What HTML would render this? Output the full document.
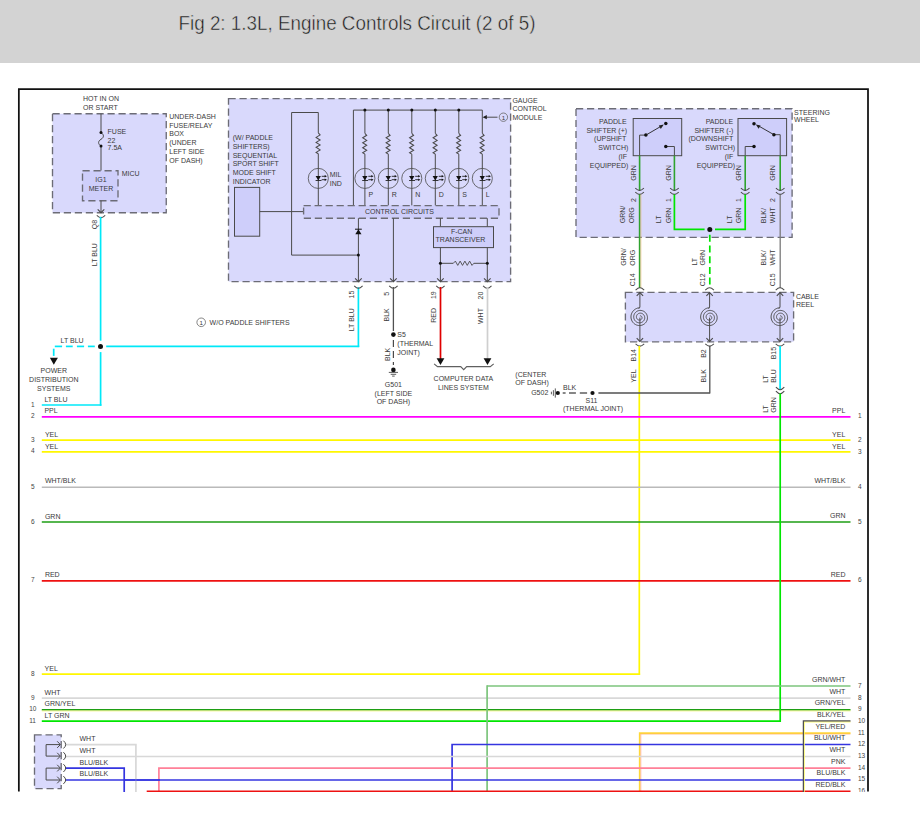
<!DOCTYPE html>
<html><head><meta charset="utf-8"><style>
html,body{margin:0;padding:0;background:#fff;width:920px;height:817px;overflow:hidden}
svg{display:block}
text{font-family:"Liberation Sans",sans-serif}
</style></head><body>
<svg width="920" height="817" viewBox="0 0 920 817">
<defs><clipPath id="cp"><rect x="0" y="0" width="920" height="792"/></clipPath></defs>
<g clip-path="url(#cp)">
<rect x="0" y="0" width="920" height="63" fill="#d3d3d3"/>
<text x="178.5" y="29.9" font-size="19.6" textLength="357" lengthAdjust="spacingAndGlyphs" fill="#1e1e1e" stroke="#d3d3d3" stroke-width="0.45">Fig 2: 1.3L, Engine Controls Circuit (2 of 5)</text>
<path d="M18.85,791.5 L18.85,89 L868,89 L868,791.5" fill="none" stroke="#111" stroke-width="1.75"/>
<rect x="52.5" y="113.75" width="113.75" height="99.0" fill="#d9d9fc" stroke="#6c6c76" stroke-width="1.35" stroke-dasharray="7.2 3.8"/>
<text x="83" y="101.0" font-size="7" fill="#3a3a3a" >HOT IN ON</text>
<text x="83" y="109.7" font-size="7" fill="#3a3a3a" >OR START</text>
<text x="169.25" y="118.75" font-size="7" fill="#3a3a3a" >UNDER-DASH</text>
<text x="169.25" y="127.5" font-size="7" fill="#3a3a3a" >FUSE/RELAY</text>
<text x="169.25" y="136.25" font-size="7" fill="#3a3a3a" >BOX</text>
<text x="169.25" y="145.0" font-size="7" fill="#3a3a3a" >(UNDER</text>
<text x="169.25" y="153.75" font-size="7" fill="#3a3a3a" >LEFT SIDE</text>
<text x="169.25" y="162.5" font-size="7" fill="#3a3a3a" >OF DASH)</text>
<line x1="101" y1="113.75" x2="101" y2="132.6" stroke="#4a4a4a" stroke-width="1" />
<path d="M101,132.6 C104.2,134.6 104.2,137.4 101,139.3 C97.8,141.2 97.8,144 101,146" fill="none" stroke="#4a4a4a" stroke-width="1" />
<line x1="101" y1="146" x2="101" y2="170.75" stroke="#4a4a4a" stroke-width="1" />
<circle cx="101" cy="132.6" r="1.5" fill="#111"/>
<circle cx="101" cy="146" r="1.5" fill="#111"/>
<text x="107.6" y="133.9" font-size="7" fill="#3a3a3a" >FUSE</text>
<text x="107.6" y="142.6" font-size="7" fill="#3a3a3a" >22</text>
<text x="107.6" y="149.7" font-size="7" fill="#3a3a3a" >7.5A</text>
<rect x="82.5" y="170.75" width="35.5" height="30.0" fill="#cecefa" stroke="#6c6c76" stroke-width="1.35" stroke-dasharray="7.2 3.8"/>
<text x="101" y="182" text-anchor="middle" font-size="7" fill="#3a3a3a" >IG1</text>
<text x="101" y="190.75" text-anchor="middle" font-size="7" fill="#3a3a3a" >METER</text>
<text x="121.75" y="175.75" font-size="7" fill="#3a3a3a" >MICU</text>
<line x1="101" y1="200.75" x2="101" y2="212.6" stroke="#4a4a4a" stroke-width="1" />
<polyline points="97.7,209.29999999999998 101,212.6 104.3,209.29999999999998" fill="none" stroke="#4a4a4a" stroke-width="1.1" />
<path d="M96.8,215.29999999999998 Q99.53,217.79999999999998 101,217.6 Q102.47,217.79999999999998 105.2,215.29999999999998" fill="none" stroke="#4a4a4a" stroke-width="1.1" />
<text transform="translate(96.9,229.2) rotate(-90)" font-size="7" fill="#3a3a3a">Q8</text>
<text transform="translate(96.9,266.2) rotate(-90)" font-size="7" fill="#3a3a3a">LT BLU</text>
<line x1="100.6" y1="216.8" x2="100.6" y2="340.7" stroke="#00e8f8" stroke-width="1.7" />
<line x1="100.6" y1="352.1" x2="100.6" y2="405.8" stroke="#00e8f8" stroke-width="1.7" />
<line x1="41.8" y1="405" x2="101.45" y2="405" stroke="#00e8f8" stroke-width="1.7" />
<line x1="106.2" y1="346.3" x2="359.25" y2="346.3" stroke="#00e8f8" stroke-width="1.7" />
<line x1="358.4" y1="287.2" x2="358.4" y2="347.1" stroke="#00e8f8" stroke-width="1.7" />
<circle cx="100.5" cy="346.4" r="2.5" fill="#111"/>
<line x1="54.8" y1="346.4" x2="62.1" y2="346.4" stroke="#00e8f8" stroke-width="1.7" />
<line x1="65.9" y1="346.4" x2="72.7" y2="346.4" stroke="#00e8f8" stroke-width="1.7" />
<line x1="76.9" y1="346.4" x2="84.1" y2="346.4" stroke="#00e8f8" stroke-width="1.7" />
<line x1="87.9" y1="346.4" x2="94.8" y2="346.4" stroke="#00e8f8" stroke-width="1.7" />
<line x1="53.7" y1="348.7" x2="53.7" y2="355.9" stroke="#00e8f8" stroke-width="1.7" />
<path d="M49.9,357.8 L57.9,357.8 L53.8,364.7 Z" fill="#111"/>
<text x="60.6" y="342.6" font-size="7" fill="#3a3a3a" >LT BLU</text>
<text x="53.8" y="372.7" text-anchor="middle" font-size="7" fill="#3a3a3a" >POWER</text>
<text x="53.8" y="381.6" text-anchor="middle" font-size="7" fill="#3a3a3a" >DISTRIBUTION</text>
<text x="53.8" y="390.5" text-anchor="middle" font-size="7" fill="#3a3a3a" >SYSTEMS</text>
<circle cx="201.2" cy="322.3" r="4.3" fill="none" stroke="#666" stroke-width="0.8"/>
<text x="201.2" y="324.6" text-anchor="middle" font-size="6.2" fill="#3a3a3a" >1</text>
<text x="209.6" y="324.7" font-size="7" fill="#3a3a3a" >W/O PADDLE SHIFTERS</text>
<rect x="228.5" y="98.6" width="282.1" height="183.00000000000003" fill="#d9d9fc" stroke="#6c6c76" stroke-width="1.35" stroke-dasharray="7.2 3.8"/>
<text x="512.4" y="102.8" font-size="7" fill="#3a3a3a" >GAUGE</text>
<text x="512.4" y="111.3" font-size="7" fill="#3a3a3a" >CONTROL</text>
<text x="512.4" y="119.8" font-size="7" fill="#3a3a3a" >MODULE</text>
<text x="232.7" y="139.9" font-size="7" fill="#3a3a3a" >(W/ PADDLE</text>
<text x="232.7" y="148.7" font-size="7" fill="#3a3a3a" >SHIFTERS)</text>
<text x="232.7" y="157.5" font-size="7" fill="#3a3a3a" >SEQUENTIAL</text>
<text x="232.7" y="166.3" font-size="7" fill="#3a3a3a" >SPORT SHIFT</text>
<text x="232.7" y="175.1" font-size="7" fill="#3a3a3a" >MODE SHIFT</text>
<text x="232.7" y="183.9" font-size="7" fill="#3a3a3a" >INDICATOR</text>
<rect x="234.5" y="187.4" width="25.19999999999999" height="48.79999999999998" fill="#cecefa" stroke="#4a4a4a" stroke-width="1"/>
<line x1="259.7" y1="211.6" x2="303.6" y2="211.6" stroke="#4a4a4a" stroke-width="1" />
<polyline points="318.3,132.9 318.3,112.5 291.6,112.5 291.6,255.1 358.4,255.1" fill="none" stroke="#4a4a4a" stroke-width="1" />
<polyline points="318.3,132.9 320.1,134.9 316.1,137.4 320.1,140.0 316.1,142.4 320.1,144.9 316.1,147.3 320.1,149.9 316.1,152.4 318.3,153.7" fill="none" stroke="#4a4a4a" stroke-width="1.05" />
<line x1="318.3" y1="153.7" x2="318.3" y2="205.6" stroke="#4a4a4a" stroke-width="1" />
<circle cx="318.3" cy="178.4" r="10.05" fill="none" stroke="#4a4a4a" stroke-width="0.8"/>
<path d="M315.6,176.1 L320.90000000000003,176.1 L318.3,180.5 Z" fill="#111"/>
<line x1="315.6" y1="180.5" x2="321.5" y2="180.5" stroke="#222" stroke-width="0.9" />
<line x1="321.7" y1="176.3" x2="325.3" y2="176.3" stroke="#222" stroke-width="0.9" />
<path d="M326.90000000000003,176.3 L324.7,175.0 L324.7,177.60000000000002 Z" fill="#111"/>
<line x1="321.7" y1="179.70000000000002" x2="325.3" y2="179.70000000000002" stroke="#222" stroke-width="0.9" />
<path d="M326.90000000000003,179.70000000000002 L324.7,178.4 L324.7,181.00000000000003 Z" fill="#111"/>
<text x="329.7" y="176.9" font-size="7" fill="#3a3a3a" >MIL</text>
<text x="329.7" y="185.8" font-size="7" fill="#3a3a3a" >IND</text>
<polyline points="353.4,205.6 353.4,110.1 482.3,110.1" fill="none" stroke="#4a4a4a" stroke-width="1" />
<line x1="364.9" y1="110.1" x2="364.9" y2="133.3" stroke="#4a4a4a" stroke-width="1" />
<polyline points="364.9,133.3 366.7,135.3 362.7,137.8 366.7,140.4 362.7,142.8 366.7,145.3 362.7,147.7 366.7,150.3 362.7,152.8 364.9,154.1" fill="none" stroke="#4a4a4a" stroke-width="1.05" />
<line x1="364.9" y1="154.1" x2="364.9" y2="205.6" stroke="#4a4a4a" stroke-width="1" />
<circle cx="364.9" cy="110.1" r="1.5" fill="#111"/>
<circle cx="364.9" cy="178.4" r="10.05" fill="none" stroke="#4a4a4a" stroke-width="0.8"/>
<path d="M362.2,176.1 L367.5,176.1 L364.9,180.5 Z" fill="#111"/>
<line x1="362.2" y1="180.5" x2="368.09999999999997" y2="180.5" stroke="#222" stroke-width="0.9" />
<line x1="368.29999999999995" y1="176.3" x2="371.9" y2="176.3" stroke="#222" stroke-width="0.9" />
<path d="M373.5,176.3 L371.29999999999995,175.0 L371.29999999999995,177.60000000000002 Z" fill="#111"/>
<line x1="368.29999999999995" y1="179.70000000000002" x2="371.9" y2="179.70000000000002" stroke="#222" stroke-width="0.9" />
<path d="M373.5,179.70000000000002 L371.29999999999995,178.4 L371.29999999999995,181.00000000000003 Z" fill="#111"/>
<text x="368.4" y="196.7" font-size="7" fill="#3a3a3a" >P</text>
<line x1="388.3" y1="110.1" x2="388.3" y2="133.3" stroke="#4a4a4a" stroke-width="1" />
<polyline points="388.3,133.3 390.1,135.3 386.1,137.8 390.1,140.4 386.1,142.8 390.1,145.3 386.1,147.7 390.1,150.3 386.1,152.8 388.3,154.1" fill="none" stroke="#4a4a4a" stroke-width="1.05" />
<line x1="388.3" y1="154.1" x2="388.3" y2="205.6" stroke="#4a4a4a" stroke-width="1" />
<circle cx="388.3" cy="110.1" r="1.5" fill="#111"/>
<circle cx="388.3" cy="178.4" r="10.05" fill="none" stroke="#4a4a4a" stroke-width="0.8"/>
<path d="M385.6,176.1 L390.90000000000003,176.1 L388.3,180.5 Z" fill="#111"/>
<line x1="385.6" y1="180.5" x2="391.5" y2="180.5" stroke="#222" stroke-width="0.9" />
<line x1="391.7" y1="176.3" x2="395.3" y2="176.3" stroke="#222" stroke-width="0.9" />
<path d="M396.90000000000003,176.3 L394.7,175.0 L394.7,177.60000000000002 Z" fill="#111"/>
<line x1="391.7" y1="179.70000000000002" x2="395.3" y2="179.70000000000002" stroke="#222" stroke-width="0.9" />
<path d="M396.90000000000003,179.70000000000002 L394.7,178.4 L394.7,181.00000000000003 Z" fill="#111"/>
<text x="391.8" y="196.7" font-size="7" fill="#3a3a3a" >R</text>
<line x1="411.8" y1="110.1" x2="411.8" y2="133.3" stroke="#4a4a4a" stroke-width="1" />
<polyline points="411.8,133.3 413.6,135.3 409.6,137.8 413.6,140.4 409.6,142.8 413.6,145.3 409.6,147.7 413.6,150.3 409.6,152.8 411.8,154.1" fill="none" stroke="#4a4a4a" stroke-width="1.05" />
<line x1="411.8" y1="154.1" x2="411.8" y2="205.6" stroke="#4a4a4a" stroke-width="1" />
<circle cx="411.8" cy="110.1" r="1.5" fill="#111"/>
<circle cx="411.8" cy="178.4" r="10.05" fill="none" stroke="#4a4a4a" stroke-width="0.8"/>
<path d="M409.1,176.1 L414.40000000000003,176.1 L411.8,180.5 Z" fill="#111"/>
<line x1="409.1" y1="180.5" x2="415.0" y2="180.5" stroke="#222" stroke-width="0.9" />
<line x1="415.2" y1="176.3" x2="418.8" y2="176.3" stroke="#222" stroke-width="0.9" />
<path d="M420.40000000000003,176.3 L418.2,175.0 L418.2,177.60000000000002 Z" fill="#111"/>
<line x1="415.2" y1="179.70000000000002" x2="418.8" y2="179.70000000000002" stroke="#222" stroke-width="0.9" />
<path d="M420.40000000000003,179.70000000000002 L418.2,178.4 L418.2,181.00000000000003 Z" fill="#111"/>
<text x="415.3" y="196.7" font-size="7" fill="#3a3a3a" >N</text>
<line x1="435.3" y1="110.1" x2="435.3" y2="133.3" stroke="#4a4a4a" stroke-width="1" />
<polyline points="435.3,133.3 437.1,135.3 433.1,137.8 437.1,140.4 433.1,142.8 437.1,145.3 433.1,147.7 437.1,150.3 433.1,152.8 435.3,154.1" fill="none" stroke="#4a4a4a" stroke-width="1.05" />
<line x1="435.3" y1="154.1" x2="435.3" y2="205.6" stroke="#4a4a4a" stroke-width="1" />
<circle cx="435.3" cy="110.1" r="1.5" fill="#111"/>
<circle cx="435.3" cy="178.4" r="10.05" fill="none" stroke="#4a4a4a" stroke-width="0.8"/>
<path d="M432.6,176.1 L437.90000000000003,176.1 L435.3,180.5 Z" fill="#111"/>
<line x1="432.6" y1="180.5" x2="438.5" y2="180.5" stroke="#222" stroke-width="0.9" />
<line x1="438.7" y1="176.3" x2="442.3" y2="176.3" stroke="#222" stroke-width="0.9" />
<path d="M443.90000000000003,176.3 L441.7,175.0 L441.7,177.60000000000002 Z" fill="#111"/>
<line x1="438.7" y1="179.70000000000002" x2="442.3" y2="179.70000000000002" stroke="#222" stroke-width="0.9" />
<path d="M443.90000000000003,179.70000000000002 L441.7,178.4 L441.7,181.00000000000003 Z" fill="#111"/>
<text x="438.8" y="196.7" font-size="7" fill="#3a3a3a" >D</text>
<line x1="458.8" y1="110.1" x2="458.8" y2="133.3" stroke="#4a4a4a" stroke-width="1" />
<polyline points="458.8,133.3 460.6,135.3 456.6,137.8 460.6,140.4 456.6,142.8 460.6,145.3 456.6,147.7 460.6,150.3 456.6,152.8 458.8,154.1" fill="none" stroke="#4a4a4a" stroke-width="1.05" />
<line x1="458.8" y1="154.1" x2="458.8" y2="205.6" stroke="#4a4a4a" stroke-width="1" />
<circle cx="458.8" cy="110.1" r="1.5" fill="#111"/>
<circle cx="458.8" cy="178.4" r="10.05" fill="none" stroke="#4a4a4a" stroke-width="0.8"/>
<path d="M456.1,176.1 L461.40000000000003,176.1 L458.8,180.5 Z" fill="#111"/>
<line x1="456.1" y1="180.5" x2="462.0" y2="180.5" stroke="#222" stroke-width="0.9" />
<line x1="462.2" y1="176.3" x2="465.8" y2="176.3" stroke="#222" stroke-width="0.9" />
<path d="M467.40000000000003,176.3 L465.2,175.0 L465.2,177.60000000000002 Z" fill="#111"/>
<line x1="462.2" y1="179.70000000000002" x2="465.8" y2="179.70000000000002" stroke="#222" stroke-width="0.9" />
<path d="M467.40000000000003,179.70000000000002 L465.2,178.4 L465.2,181.00000000000003 Z" fill="#111"/>
<text x="462.3" y="196.7" font-size="7" fill="#3a3a3a" >S</text>
<line x1="482.3" y1="110.1" x2="482.3" y2="133.3" stroke="#4a4a4a" stroke-width="1" />
<polyline points="482.3,133.3 484.1,135.3 480.1,137.8 484.1,140.4 480.1,142.8 484.1,145.3 480.1,147.7 484.1,150.3 480.1,152.8 482.3,154.1" fill="none" stroke="#4a4a4a" stroke-width="1.05" />
<line x1="482.3" y1="154.1" x2="482.3" y2="205.6" stroke="#4a4a4a" stroke-width="1" />
<circle cx="482.3" cy="178.4" r="10.05" fill="none" stroke="#4a4a4a" stroke-width="0.8"/>
<path d="M479.6,176.1 L484.90000000000003,176.1 L482.3,180.5 Z" fill="#111"/>
<line x1="479.6" y1="180.5" x2="485.5" y2="180.5" stroke="#222" stroke-width="0.9" />
<line x1="485.7" y1="176.3" x2="489.3" y2="176.3" stroke="#222" stroke-width="0.9" />
<path d="M490.90000000000003,176.3 L488.7,175.0 L488.7,177.60000000000002 Z" fill="#111"/>
<line x1="485.7" y1="179.70000000000002" x2="489.3" y2="179.70000000000002" stroke="#222" stroke-width="0.9" />
<path d="M490.90000000000003,179.70000000000002 L488.7,178.4 L488.7,181.00000000000003 Z" fill="#111"/>
<text x="485.8" y="196.7" font-size="7" fill="#3a3a3a" >L</text>
<line x1="497.5" y1="117.2" x2="484" y2="117.2" stroke="#4a4a4a" stroke-width="1" />
<path d="M482.6,117.2 L486.8,115.1 L486.8,119.3 Z" fill="#222"/>
<circle cx="503.4" cy="117.2" r="4.2" fill="#d9d9fc" stroke="#666" stroke-width="0.8"/>
<text x="503.4" y="119.5" text-anchor="middle" font-size="6.2" fill="#3a3a3a" >1</text>
<rect x="303.6" y="205.6" width="195.39999999999998" height="12.599999999999994" fill="#cecefa" stroke="#6c6c76" stroke-width="1.35" stroke-dasharray="7.2 3.8"/>
<text x="365" y="213.6" font-size="7" fill="#3a3a3a" >CONTROL CIRCUITS</text>
<line x1="358.4" y1="218.2" x2="358.4" y2="281" stroke="#4a4a4a" stroke-width="1" />
<path d="M355.3,234.3 L361.5,234.3 L358.4,229.2 Z" fill="#111"/>
<line x1="355" y1="229.2" x2="361.8" y2="229.2" stroke="#111" stroke-width="1" />
<circle cx="358.4" cy="255.1" r="1.5" fill="#111"/>
<line x1="393.4" y1="218.2" x2="393.4" y2="281" stroke="#4a4a4a" stroke-width="1" />
<line x1="440.4" y1="218.2" x2="440.4" y2="226.7" stroke="#4a4a4a" stroke-width="1" />
<line x1="487.3" y1="218.2" x2="487.3" y2="226.7" stroke="#4a4a4a" stroke-width="1" />
<rect x="433.5" y="226.7" width="60.0" height="20.900000000000006" fill="#cecefa" stroke="#4a4a4a" stroke-width="1"/>
<text x="461.6" y="233.9" text-anchor="middle" font-size="7" fill="#3a3a3a" >F-CAN</text>
<text x="460.5" y="241.7" text-anchor="middle" font-size="7" fill="#3a3a3a" >TRANSCEIVER</text>
<line x1="440.4" y1="247.6" x2="440.4" y2="281" stroke="#4a4a4a" stroke-width="1" />
<line x1="487.3" y1="247.6" x2="487.3" y2="281" stroke="#4a4a4a" stroke-width="1" />
<polyline points="440.4,263.3 453.3,263.3" fill="none" stroke="#4a4a4a" stroke-width="1" />
<polyline points="453.3,263.3 455.39,261.1 457.76,265.4 460.14,261.1 462.51,265.4 464.89,261.1 467.26,265.4 469.64,261.1 472.01,265.4 473.8,263.3" fill="none" stroke="#4a4a4a" stroke-width="0.9" />
<polyline points="473.8,263.3 487.3,263.3" fill="none" stroke="#4a4a4a" stroke-width="1" />
<circle cx="440.4" cy="263.2" r="1.5" fill="#111"/>
<circle cx="487.3" cy="263.2" r="1.5" fill="#111"/>
<polyline points="355.09999999999997,278.4 358.4,281.7 361.7,278.4" fill="none" stroke="#4a4a4a" stroke-width="1.1" />
<path d="M354.2,285.8 Q356.92999999999995,288.4 358.4,288.2 Q359.87,288.4 362.59999999999997,285.8" fill="none" stroke="#4a4a4a" stroke-width="1.1" />
<polyline points="390.09999999999997,278.4 393.4,281.7 396.7,278.4" fill="none" stroke="#4a4a4a" stroke-width="1.1" />
<path d="M389.2,285.8 Q391.92999999999995,288.4 393.4,288.2 Q394.87,288.4 397.59999999999997,285.8" fill="none" stroke="#4a4a4a" stroke-width="1.1" />
<polyline points="437.09999999999997,278.4 440.4,281.7 443.7,278.4" fill="none" stroke="#4a4a4a" stroke-width="1.1" />
<path d="M436.2,285.8 Q438.92999999999995,288.4 440.4,288.2 Q441.87,288.4 444.59999999999997,285.8" fill="none" stroke="#4a4a4a" stroke-width="1.1" />
<polyline points="484.0,278.4 487.3,281.7 490.6,278.4" fill="none" stroke="#4a4a4a" stroke-width="1.1" />
<path d="M483.1,285.8 Q485.83,288.4 487.3,288.2 Q488.77000000000004,288.4 491.5,285.8" fill="none" stroke="#4a4a4a" stroke-width="1.1" />
<text transform="translate(354.3,294.6) rotate(-90)" text-anchor="middle" font-size="7" fill="#3a3a3a">15</text>
<text transform="translate(354.3,331.3) rotate(-90)" font-size="7" fill="#3a3a3a">LT BLU</text>
<text transform="translate(389.4,293.8) rotate(-90)" text-anchor="middle" font-size="7" fill="#3a3a3a">5</text>
<text transform="translate(389.4,321.5) rotate(-90)" font-size="7" fill="#3a3a3a">BLK</text>
<text transform="translate(436.4,295.2) rotate(-90)" text-anchor="middle" font-size="7" fill="#3a3a3a">19</text>
<text transform="translate(436.4,322.7) rotate(-90)" font-size="7" fill="#3a3a3a">RED</text>
<text transform="translate(483.4,295.6) rotate(-90)" text-anchor="middle" font-size="7" fill="#3a3a3a">20</text>
<text transform="translate(483.4,324) rotate(-90)" font-size="7" fill="#3a3a3a">WHT</text>
<line x1="393.4" y1="287" x2="393.4" y2="331" stroke="#505050" stroke-width="1.3" />
<circle cx="393.4" cy="334.6" r="2.3" fill="#111"/>
<line x1="393.4" y1="340" x2="393.4" y2="365" stroke="#4a4a4a" stroke-width="1.2" stroke-dasharray="7 4"/>
<circle cx="393.4" cy="369.9" r="2.3" fill="#111"/>
<line x1="388.8" y1="372.4" x2="398" y2="372.4" stroke="#4a4a4a" stroke-width="0.9" />
<line x1="390.7" y1="374.3" x2="396.2" y2="374.3" stroke="#4a4a4a" stroke-width="0.9" />
<line x1="392.1" y1="376.1" x2="394.7" y2="376.1" stroke="#4a4a4a" stroke-width="0.9" />
<text transform="translate(389.7,361) rotate(-90)" font-size="7" fill="#3a3a3a">BLK</text>
<text x="397.3" y="336.8" font-size="7" fill="#3a3a3a" >S5</text>
<text x="397.3" y="345.9" font-size="7" fill="#3a3a3a" >(THERMAL</text>
<text x="397.3" y="355.0" font-size="7" fill="#3a3a3a" >JOINT)</text>
<text x="393.4" y="387.2" text-anchor="middle" font-size="7" fill="#3a3a3a" >G501</text>
<text x="393.4" y="395.6" text-anchor="middle" font-size="7" fill="#3a3a3a" >(LEFT SIDE</text>
<text x="393.4" y="404.0" text-anchor="middle" font-size="7" fill="#3a3a3a" >OF DASH)</text>
<line x1="440.5" y1="287" x2="440.5" y2="360" stroke="#e00000" stroke-width="1.7" />
<line x1="487.5" y1="287" x2="487.5" y2="360" stroke="#cfcfcf" stroke-width="1.7" />
<path d="M436.6,358.3 L444.4,358.3 L440.5,365 Z" fill="#111"/>
<path d="M483.6,358.3 L491.4,358.3 L487.5,365 Z" fill="#111"/>
<polyline points="434.1,363.9 437.5,366.6 460.7,366.6 463.7,369.6 466.7,366.6 490.3,366.6 493.7,363.9" fill="none" stroke="#606060" stroke-width="1.2" />
<text x="463.4" y="380.8" text-anchor="middle" font-size="7" fill="#3a3a3a" >COMPUTER DATA</text>
<text x="463.4" y="389.6" text-anchor="middle" font-size="7" fill="#3a3a3a" >LINES SYSTEM</text>
<rect x="576" y="108.7" width="216.10000000000002" height="128.60000000000002" fill="#d9d9fc" stroke="#6c6c76" stroke-width="1.35" stroke-dasharray="7.2 3.8"/>
<text x="794.1" y="114.6" font-size="7" fill="#3a3a3a" >STEERING</text>
<text x="794.1" y="122.4" font-size="7" fill="#3a3a3a" >WHEEL</text>
<rect x="633.2" y="118.5" width="48.5" height="37.19999999999999" fill="#cecefa" stroke="#4a4a4a" stroke-width="1"/>
<rect x="738" y="118.5" width="48.60000000000002" height="37.19999999999999" fill="#cecefa" stroke="#4a4a4a" stroke-width="1"/>
<text x="626.6" y="123.9" text-anchor="end" font-size="7" fill="#3a3a3a" >PADDLE</text>
<text x="627.1" y="132.66" text-anchor="end" font-size="7" fill="#3a3a3a" >SHIFTER (+)</text>
<text x="626.4" y="141.42" text-anchor="end" font-size="7" fill="#3a3a3a" >(UPSHIFT</text>
<text x="628.3" y="150.18" text-anchor="end" font-size="7" fill="#3a3a3a" >SWITCH)</text>
<text x="627.1" y="158.94" text-anchor="end" font-size="7" fill="#3a3a3a" >(IF</text>
<text x="628.3" y="167.7" text-anchor="end" font-size="7" fill="#3a3a3a" >EQUIPPED)</text>
<text x="733.2" y="123.9" text-anchor="end" font-size="7" fill="#3a3a3a" >PADDLE</text>
<text x="733.3" y="132.66" text-anchor="end" font-size="7" fill="#3a3a3a" >SHIFTER (-)</text>
<text x="733.2" y="141.42" text-anchor="end" font-size="7" fill="#3a3a3a" >(DOWNSHIFT</text>
<text x="735.2" y="150.18" text-anchor="end" font-size="7" fill="#3a3a3a" >SWITCH)</text>
<text x="733.3" y="158.94" text-anchor="end" font-size="7" fill="#3a3a3a" >(IF</text>
<text x="735.2" y="167.7" text-anchor="end" font-size="7" fill="#3a3a3a" >EQUIPPED)</text>
<polyline points="645.9,135.1 639.6,135.1 639.6,155.7" fill="none" stroke="#4a4a4a" stroke-width="1" />
<polyline points="665.8,146.5 674.4,146.5 674.4,155.7" fill="none" stroke="#4a4a4a" stroke-width="1" />
<circle cx="645.9" cy="135.1" r="1.75" fill="#111"/>
<circle cx="665.8" cy="123.4" r="1.75" fill="#111"/>
<circle cx="665.8" cy="146.5" r="1.75" fill="#111"/>
<line x1="645.9" y1="135.1" x2="661.5" y2="126" stroke="#222" stroke-width="0.9" />
<path d="M663.8,124.6 L658.8,125.6 L660.8,128.9 Z" fill="#222"/>
<polyline points="754,146.5 745.2,146.5 745.2,155.7" fill="none" stroke="#4a4a4a" stroke-width="1" />
<polyline points="773.9,134.7 780.2,134.7 780.2,155.7" fill="none" stroke="#4a4a4a" stroke-width="1" />
<circle cx="754" cy="123.8" r="1.75" fill="#111"/>
<circle cx="773.9" cy="134.7" r="1.75" fill="#111"/>
<circle cx="754" cy="146.5" r="1.75" fill="#111"/>
<line x1="773.9" y1="134.7" x2="758" y2="125.6" stroke="#222" stroke-width="0.9" />
<path d="M755.8,124.4 L760.6,125.4 L758.6,128.8 Z" fill="#222"/>
<line x1="639.6" y1="155.7" x2="639.6" y2="190.4" stroke="#2ea32e" stroke-width="1.6" />
<path d="M635.3000000000001,188.1 Q638.095,190.6 639.6,190.4 Q641.105,190.6 643.9,188.1" fill="none" stroke="#4a4a4a" stroke-width="1.1" />
<path d="M635.3000000000001,192.1 Q638.095,194.6 639.6,194.4 Q641.105,194.6 643.9,192.1" fill="none" stroke="#4a4a4a" stroke-width="1.1" />
<line x1="674.4" y1="155.7" x2="674.4" y2="190.4" stroke="#2ea32e" stroke-width="1.6" />
<path d="M670.1,188.1 Q672.895,190.6 674.4,190.4 Q675.905,190.6 678.6999999999999,188.1" fill="none" stroke="#4a4a4a" stroke-width="1.1" />
<path d="M670.1,192.1 Q672.895,194.6 674.4,194.4 Q675.905,194.6 678.6999999999999,192.1" fill="none" stroke="#4a4a4a" stroke-width="1.1" />
<line x1="745.2" y1="155.7" x2="745.2" y2="190.4" stroke="#2ea32e" stroke-width="1.6" />
<path d="M740.9000000000001,188.1 Q743.695,190.6 745.2,190.4 Q746.705,190.6 749.5,188.1" fill="none" stroke="#4a4a4a" stroke-width="1.1" />
<path d="M740.9000000000001,192.1 Q743.695,194.6 745.2,194.4 Q746.705,194.6 749.5,192.1" fill="none" stroke="#4a4a4a" stroke-width="1.1" />
<line x1="780.2" y1="155.7" x2="780.2" y2="190.4" stroke="#2ea32e" stroke-width="1.6" />
<path d="M775.9000000000001,188.1 Q778.695,190.6 780.2,190.4 Q781.705,190.6 784.5,188.1" fill="none" stroke="#4a4a4a" stroke-width="1.1" />
<path d="M775.9000000000001,192.1 Q778.695,194.6 780.2,194.4 Q781.705,194.6 784.5,192.1" fill="none" stroke="#4a4a4a" stroke-width="1.1" />
<line x1="639.6" y1="194.4" x2="639.6" y2="288" stroke="#2ea32e" stroke-width="1.6" />
<line x1="640.9" y1="194.4" x2="640.9" y2="288" stroke="#f0b070" stroke-width="0.6" />
<polyline points="674.4,194.4 674.4,229.4 704.6,229.4" fill="none" stroke="#00e600" stroke-width="1.7" />
<polyline points="715,229.4 745.2,229.4 745.2,194.4" fill="none" stroke="#00e600" stroke-width="1.7" />
<circle cx="709.8" cy="229.4" r="2.5" fill="#111"/>
<line x1="709.8" y1="234.8" x2="709.8" y2="288" stroke="#00e600" stroke-width="1.7" stroke-dasharray="7 3.7"/>
<line x1="780.2" y1="194.4" x2="780.2" y2="288" stroke="#7a7a7a" stroke-width="1.3" />
<text transform="translate(636.0,180.7) rotate(-90)" font-size="7" fill="#3a3a3a">GRN</text>
<text transform="translate(636.0,200) rotate(-90)" text-anchor="middle" font-size="7" fill="#3a3a3a">2</text>
<text transform="translate(625.3,223.2) rotate(-90)" font-size="7" fill="#3a3a3a">GRN/</text>
<text transform="translate(634.1,223.2) rotate(-90)" font-size="7" fill="#3a3a3a">ORG</text>
<text transform="translate(670.9,180.7) rotate(-90)" font-size="7" fill="#3a3a3a">GRN</text>
<text transform="translate(670.9,200) rotate(-90)" text-anchor="middle" font-size="7" fill="#3a3a3a">1</text>
<text transform="translate(660.5,223.2) rotate(-90)" font-size="7" fill="#3a3a3a">LT</text>
<text transform="translate(670.9,223.2) rotate(-90)" font-size="7" fill="#3a3a3a">GRN</text>
<text transform="translate(740.6,180.7) rotate(-90)" font-size="7" fill="#3a3a3a">GRN</text>
<text transform="translate(740.6,200) rotate(-90)" text-anchor="middle" font-size="7" fill="#3a3a3a">1</text>
<text transform="translate(731.8,223.2) rotate(-90)" font-size="7" fill="#3a3a3a">LT</text>
<text transform="translate(740.6,223.2) rotate(-90)" font-size="7" fill="#3a3a3a">GRN</text>
<text transform="translate(775.4,180.7) rotate(-90)" font-size="7" fill="#3a3a3a">GRN</text>
<text transform="translate(775.4,200) rotate(-90)" text-anchor="middle" font-size="7" fill="#3a3a3a">2</text>
<text transform="translate(766.4,223.2) rotate(-90)" font-size="7" fill="#3a3a3a">BLK/</text>
<text transform="translate(775.4,223.2) rotate(-90)" font-size="7" fill="#3a3a3a">WHT</text>
<text transform="translate(625.5,265.8) rotate(-90)" font-size="7" fill="#3a3a3a">GRN/</text>
<text transform="translate(634.6,265.8) rotate(-90)" font-size="7" fill="#3a3a3a">ORG</text>
<text transform="translate(634.6,286.3) rotate(-90)" font-size="7" fill="#3a3a3a">C14</text>
<text transform="translate(696.6,265.5) rotate(-90)" font-size="7" fill="#3a3a3a">LT</text>
<text transform="translate(704.9,265.5) rotate(-90)" font-size="7" fill="#3a3a3a">GRN</text>
<text transform="translate(704.9,286.3) rotate(-90)" font-size="7" fill="#3a3a3a">C12</text>
<text transform="translate(766.2,265.5) rotate(-90)" font-size="7" fill="#3a3a3a">BLK/</text>
<text transform="translate(775.4,265.5) rotate(-90)" font-size="7" fill="#3a3a3a">WHT</text>
<text transform="translate(775.4,286.3) rotate(-90)" font-size="7" fill="#3a3a3a">C15</text>
<rect x="625.4" y="292.4" width="168.20000000000005" height="49.400000000000034" fill="#d9d9fc" stroke="#6c6c76" stroke-width="1.35" stroke-dasharray="7.2 3.8"/>
<text x="795.9" y="298.8" font-size="7" fill="#3a3a3a" >CABLE</text>
<text x="795.9" y="306.9" font-size="7" fill="#3a3a3a" >REEL</text>
<path d="M635.6,290.1 Q638.395,287.6 639.9,287.8 Q641.405,287.6 644.1999999999999,290.1" fill="none" stroke="#4a4a4a" stroke-width="1.1" />
<polyline points="636.6999999999999,295.8 639.9,292.6 643.1,295.8" fill="none" stroke="#4a4a4a" stroke-width="1.1" />
<polyline points="639.9,292.6 639.9,307" fill="none" stroke="#4a4a4a" stroke-width="1" />
<path d="M639.9,307 Q639.9,308.3 638.4,308.5" fill="none" stroke="#4a4a4a" stroke-width="0.8" />
<path d="M639.90,307.70 L638.78,307.82 L637.68,308.06 L636.63,308.44 L635.63,308.93 L634.71,309.53 L633.87,310.23 L633.11,311.03 L632.47,311.90 L631.93,312.83 L631.50,313.82 L631.20,314.85 L631.03,315.89 L630.97,316.95 L631.04,318.00 L631.24,319.02 L631.55,320.01 L631.97,320.95 L632.50,321.83 L633.13,322.64 L633.84,323.36 L634.62,323.99 L635.47,324.52 L636.37,324.95 L637.31,325.26 L638.28,325.46 L639.25,325.54 L640.22,325.51 L641.18,325.36 L642.10,325.11 L642.99,324.75 L643.81,324.29 L644.58,323.74 L645.27,323.11 L645.87,322.40 L646.39,321.64 L646.81,320.82 L647.13,319.97 L647.34,319.09 L647.45,318.19 L647.45,317.30 L647.35,316.42 L647.14,315.56 L646.84,314.74 L646.44,313.97 L645.96,313.25 L645.41,312.60 L644.78,312.02 L644.10,311.52 L643.36,311.12 L642.59,310.80 L641.80,310.58 L640.98,310.45 L640.17,310.42 L639.36,310.49 L638.58,310.65 L637.82,310.90 L637.10,311.23 L636.44,311.65 L635.83,312.14 L635.29,312.69 L634.82,313.29 L634.42,313.94 L634.11,314.63 L633.89,315.35 L633.75,316.08 L633.70,316.81 L633.74,317.54 L633.86,318.26 L634.06,318.95 L634.35,319.60 L634.70,320.21 L635.12,320.77 L635.60,321.28 L636.13,321.72 L636.70,322.09 L637.31,322.38 L637.94,322.60 L638.59,322.75 L639.25,322.81 L639.90,322.80 L640.54,322.71 L641.16,322.55 L641.75,322.32 L642.30,322.02 L642.81,321.66 L643.27,321.25 L643.68,320.79 L644.02,320.29 L644.30,319.76 L644.51,319.21 L644.65,318.64 L644.72,318.06 L644.73,317.49 L644.67,316.92 L644.54,316.38 L644.35,315.85 L644.10,315.36 L643.80,314.91 L643.45,314.50 L643.06,314.14 L642.64,313.83 L642.18,313.57 L641.71,313.38 L641.22,313.24 L640.72,313.16 L640.23,313.15 L639.74,313.19 L639.26,313.29 L638.81,313.44 L638.38,313.64 L637.99,313.89 L637.63,314.18 L637.31,314.50 L637.04,314.86 L636.82,315.24 L636.64,315.64 L636.52,316.05 L636.45,316.47 L636.42,316.89 L636.45,317.30 L636.52,317.70 L636.64,318.08 L636.81,318.44 L637.01,318.77 L637.24,319.07 L637.51,319.34 L637.80,319.57 L638.11,319.76 L638.44,319.91 L638.78,320.01 L639.12,320.08 L639.46,320.10 L639.79,320.08 L640.11,320.02 L640.42,319.93 L640.71,319.80 L640.98,319.64 L641.22,319.46 L641.43,319.24 L641.61,319.01 L641.76,318.77 L641.88,318.51 L641.96,318.25 L642.01,317.99 L642.03,317.72 L642.01,317.47 L641.96,317.22 L641.89,316.98 L641.79,316.77 L641.67,316.57 L641.52,316.39 L641.36,316.24 L641.19,316.11 L641.01,316.00 L640.82,315.92 L640.63,315.87 L640.44,315.84 L640.25,315.84 L640.07,315.86 L639.90,315.90" fill="none" stroke="#4a4a4a" stroke-width="0.95" />
<line x1="639.9" y1="317.6" x2="639.9" y2="341.4" stroke="#4a4a4a" stroke-width="1" />
<polyline points="636.6999999999999,338.2 639.9,341.4 643.1,338.2" fill="none" stroke="#4a4a4a" stroke-width="1.1" />
<path d="M635.6,343.8 Q638.395,346.3 639.9,346.1 Q641.405,346.3 644.1999999999999,343.8" fill="none" stroke="#4a4a4a" stroke-width="1.1" />
<path d="M705.3000000000001,290.1 Q708.095,287.6 709.6,287.8 Q711.105,287.6 713.9,290.1" fill="none" stroke="#4a4a4a" stroke-width="1.1" />
<polyline points="706.4,295.8 709.6,292.6 712.8000000000001,295.8" fill="none" stroke="#4a4a4a" stroke-width="1.1" />
<polyline points="709.6,292.6 709.6,307" fill="none" stroke="#4a4a4a" stroke-width="1" />
<path d="M709.6,307 Q709.6,308.3 708.1,308.5" fill="none" stroke="#4a4a4a" stroke-width="0.8" />
<path d="M709.60,307.70 L708.48,307.82 L707.38,308.06 L706.33,308.44 L705.33,308.93 L704.41,309.53 L703.57,310.23 L702.81,311.03 L702.17,311.90 L701.63,312.83 L701.20,313.82 L700.90,314.85 L700.73,315.89 L700.67,316.95 L700.74,318.00 L700.94,319.02 L701.25,320.01 L701.67,320.95 L702.20,321.83 L702.83,322.64 L703.54,323.36 L704.32,323.99 L705.17,324.52 L706.07,324.95 L707.01,325.26 L707.98,325.46 L708.95,325.54 L709.92,325.51 L710.88,325.36 L711.80,325.11 L712.69,324.75 L713.51,324.29 L714.28,323.74 L714.97,323.11 L715.57,322.40 L716.09,321.64 L716.51,320.82 L716.83,319.97 L717.04,319.09 L717.15,318.19 L717.15,317.30 L717.05,316.42 L716.84,315.56 L716.54,314.74 L716.14,313.97 L715.66,313.25 L715.11,312.60 L714.48,312.02 L713.80,311.52 L713.06,311.12 L712.29,310.80 L711.50,310.58 L710.68,310.45 L709.87,310.42 L709.06,310.49 L708.28,310.65 L707.52,310.90 L706.80,311.23 L706.14,311.65 L705.53,312.14 L704.99,312.69 L704.52,313.29 L704.12,313.94 L703.81,314.63 L703.59,315.35 L703.45,316.08 L703.40,316.81 L703.44,317.54 L703.56,318.26 L703.76,318.95 L704.05,319.60 L704.40,320.21 L704.82,320.77 L705.30,321.28 L705.83,321.72 L706.40,322.09 L707.01,322.38 L707.64,322.60 L708.29,322.75 L708.95,322.81 L709.60,322.80 L710.24,322.71 L710.86,322.55 L711.45,322.32 L712.00,322.02 L712.51,321.66 L712.97,321.25 L713.38,320.79 L713.72,320.29 L714.00,319.76 L714.21,319.21 L714.35,318.64 L714.42,318.06 L714.43,317.49 L714.37,316.92 L714.24,316.38 L714.05,315.85 L713.80,315.36 L713.50,314.91 L713.15,314.50 L712.76,314.14 L712.34,313.83 L711.88,313.57 L711.41,313.38 L710.92,313.24 L710.42,313.16 L709.93,313.15 L709.44,313.19 L708.96,313.29 L708.51,313.44 L708.08,313.64 L707.69,313.89 L707.33,314.18 L707.01,314.50 L706.74,314.86 L706.52,315.24 L706.34,315.64 L706.22,316.05 L706.15,316.47 L706.12,316.89 L706.15,317.30 L706.22,317.70 L706.34,318.08 L706.51,318.44 L706.71,318.77 L706.94,319.07 L707.21,319.34 L707.50,319.57 L707.81,319.76 L708.14,319.91 L708.48,320.01 L708.82,320.08 L709.16,320.10 L709.49,320.08 L709.81,320.02 L710.12,319.93 L710.41,319.80 L710.68,319.64 L710.92,319.46 L711.13,319.24 L711.31,319.01 L711.46,318.77 L711.58,318.51 L711.66,318.25 L711.71,317.99 L711.73,317.72 L711.71,317.47 L711.66,317.22 L711.59,316.98 L711.49,316.77 L711.37,316.57 L711.22,316.39 L711.06,316.24 L710.89,316.11 L710.71,316.00 L710.52,315.92 L710.33,315.87 L710.14,315.84 L709.95,315.84 L709.77,315.86 L709.60,315.90" fill="none" stroke="#4a4a4a" stroke-width="0.95" />
<line x1="709.6" y1="317.6" x2="709.6" y2="341.4" stroke="#4a4a4a" stroke-width="1" />
<polyline points="706.4,338.2 709.6,341.4 712.8000000000001,338.2" fill="none" stroke="#4a4a4a" stroke-width="1.1" />
<path d="M705.3000000000001,343.8 Q708.095,346.3 709.6,346.1 Q711.105,346.3 713.9,343.8" fill="none" stroke="#4a4a4a" stroke-width="1.1" />
<path d="M775.7,290.1 Q778.495,287.6 780.0,287.8 Q781.505,287.6 784.3,290.1" fill="none" stroke="#4a4a4a" stroke-width="1.1" />
<polyline points="776.8,295.8 780.0,292.6 783.2,295.8" fill="none" stroke="#4a4a4a" stroke-width="1.1" />
<polyline points="780.0,292.6 780.0,307" fill="none" stroke="#4a4a4a" stroke-width="1" />
<path d="M780.0,307 Q780.0,308.3 778.5,308.5" fill="none" stroke="#4a4a4a" stroke-width="0.8" />
<path d="M780.00,307.70 L778.88,307.82 L777.78,308.06 L776.73,308.44 L775.73,308.93 L774.81,309.53 L773.97,310.23 L773.21,311.03 L772.57,311.90 L772.03,312.83 L771.60,313.82 L771.30,314.85 L771.13,315.89 L771.07,316.95 L771.14,318.00 L771.34,319.02 L771.65,320.01 L772.07,320.95 L772.60,321.83 L773.23,322.64 L773.94,323.36 L774.72,323.99 L775.57,324.52 L776.47,324.95 L777.41,325.26 L778.38,325.46 L779.35,325.54 L780.32,325.51 L781.28,325.36 L782.20,325.11 L783.09,324.75 L783.91,324.29 L784.68,323.74 L785.37,323.11 L785.97,322.40 L786.49,321.64 L786.91,320.82 L787.23,319.97 L787.44,319.09 L787.55,318.19 L787.55,317.30 L787.45,316.42 L787.24,315.56 L786.94,314.74 L786.54,313.97 L786.06,313.25 L785.51,312.60 L784.88,312.02 L784.20,311.52 L783.46,311.12 L782.69,310.80 L781.90,310.58 L781.08,310.45 L780.27,310.42 L779.46,310.49 L778.68,310.65 L777.92,310.90 L777.20,311.23 L776.54,311.65 L775.93,312.14 L775.39,312.69 L774.92,313.29 L774.52,313.94 L774.21,314.63 L773.99,315.35 L773.85,316.08 L773.80,316.81 L773.84,317.54 L773.96,318.26 L774.16,318.95 L774.45,319.60 L774.80,320.21 L775.22,320.77 L775.70,321.28 L776.23,321.72 L776.80,322.09 L777.41,322.38 L778.04,322.60 L778.69,322.75 L779.35,322.81 L780.00,322.80 L780.64,322.71 L781.26,322.55 L781.85,322.32 L782.40,322.02 L782.91,321.66 L783.37,321.25 L783.78,320.79 L784.12,320.29 L784.40,319.76 L784.61,319.21 L784.75,318.64 L784.82,318.06 L784.83,317.49 L784.77,316.92 L784.64,316.38 L784.45,315.85 L784.20,315.36 L783.90,314.91 L783.55,314.50 L783.16,314.14 L782.74,313.83 L782.28,313.57 L781.81,313.38 L781.32,313.24 L780.82,313.16 L780.33,313.15 L779.84,313.19 L779.36,313.29 L778.91,313.44 L778.48,313.64 L778.09,313.89 L777.73,314.18 L777.41,314.50 L777.14,314.86 L776.92,315.24 L776.74,315.64 L776.62,316.05 L776.55,316.47 L776.52,316.89 L776.55,317.30 L776.62,317.70 L776.74,318.08 L776.91,318.44 L777.11,318.77 L777.34,319.07 L777.61,319.34 L777.90,319.57 L778.21,319.76 L778.54,319.91 L778.88,320.01 L779.22,320.08 L779.56,320.10 L779.89,320.08 L780.21,320.02 L780.52,319.93 L780.81,319.80 L781.08,319.64 L781.32,319.46 L781.53,319.24 L781.71,319.01 L781.86,318.77 L781.98,318.51 L782.06,318.25 L782.11,317.99 L782.13,317.72 L782.11,317.47 L782.06,317.22 L781.99,316.98 L781.89,316.77 L781.77,316.57 L781.62,316.39 L781.46,316.24 L781.29,316.11 L781.11,316.00 L780.92,315.92 L780.73,315.87 L780.54,315.84 L780.35,315.84 L780.17,315.86 L780.00,315.90" fill="none" stroke="#4a4a4a" stroke-width="0.95" />
<line x1="780.0" y1="317.6" x2="780.0" y2="341.4" stroke="#4a4a4a" stroke-width="1" />
<polyline points="776.8,338.2 780.0,341.4 783.2,338.2" fill="none" stroke="#4a4a4a" stroke-width="1.1" />
<path d="M775.7,343.8 Q778.495,346.3 780.0,346.1 Q781.505,346.3 784.3,343.8" fill="none" stroke="#4a4a4a" stroke-width="1.1" />
<line x1="639.3" y1="346" x2="639.3" y2="675" stroke="#fff700" stroke-width="1.7" />
<line x1="709.8" y1="346" x2="709.8" y2="393.6" stroke="#505050" stroke-width="1.3" />
<polyline points="598.4,393 709.8,393" fill="none" stroke="#505050" stroke-width="1.3" />
<polyline points="780.1,346 780.1,389.8" fill="none" stroke="#00e8f8" stroke-width="1.7" />
<path d="M775.9,387.09999999999997 Q778.63,389.9 780.1,389.7 Q781.57,389.9 784.3000000000001,387.09999999999997" fill="none" stroke="#4a4a4a" stroke-width="1.1" />
<path d="M775.9,391.09999999999997 Q778.63,393.9 780.1,393.7 Q781.57,393.9 784.3000000000001,391.09999999999997" fill="none" stroke="#4a4a4a" stroke-width="1.1" />
<text transform="translate(635.6,361.5) rotate(-90)" font-size="7" fill="#3a3a3a">B14</text>
<text transform="translate(635.6,382.7) rotate(-90)" font-size="7" fill="#3a3a3a">YEL</text>
<text transform="translate(705.9,357.8) rotate(-90)" font-size="7" fill="#3a3a3a">B2</text>
<text transform="translate(705.9,382.4) rotate(-90)" font-size="7" fill="#3a3a3a">BLK</text>
<text transform="translate(775.6,359.3) rotate(-90)" font-size="7" fill="#3a3a3a">B15</text>
<text transform="translate(768.2,382.8) rotate(-90)" font-size="7" fill="#3a3a3a">LT</text>
<text transform="translate(775.6,382.8) rotate(-90)" font-size="7" fill="#3a3a3a">BLU</text>
<text transform="translate(768.2,412.8) rotate(-90)" font-size="7" fill="#3a3a3a">LT</text>
<text transform="translate(775.6,412.8) rotate(-90)" font-size="7" fill="#3a3a3a">GRN</text>
<line x1="562.7" y1="393" x2="565.6" y2="393" stroke="#444" stroke-width="1.3" />
<line x1="569" y1="393" x2="575.9" y2="393" stroke="#444" stroke-width="1.3" />
<line x1="579.8" y1="393" x2="587.1" y2="393" stroke="#444" stroke-width="1.3" />
<circle cx="557.8" cy="393" r="2.1" fill="#111"/>
<circle cx="592.5" cy="393" r="2.1" fill="#111"/>
<line x1="555.3" y1="388.4" x2="555.3" y2="397.6" stroke="#4a4a4a" stroke-width="0.9" />
<line x1="553.4" y1="390.2" x2="553.4" y2="395.8" stroke="#4a4a4a" stroke-width="0.9" />
<line x1="551.4" y1="391.7" x2="551.4" y2="394.3" stroke="#4a4a4a" stroke-width="0.9" />
<text x="548.3" y="394.7" text-anchor="end" font-size="7" fill="#3a3a3a" >G502</text>
<text x="515.3" y="377.2" font-size="7" fill="#3a3a3a" >(CENTER</text>
<text x="515.3" y="384.6" font-size="7" fill="#3a3a3a" >OF DASH)</text>
<text x="563" y="389.8" font-size="7" fill="#3a3a3a" >BLK</text>
<text x="591.5" y="402.7" text-anchor="middle" font-size="7" fill="#3a3a3a" >S11</text>
<text x="563" y="411.3" font-size="7" fill="#3a3a3a" >(THERMAL JOINT)</text>
<text x="31" y="406.9" font-size="6.5" fill="#444" >1</text>
<text x="44.4" y="401.6" font-size="7" fill="#3a3a3a" >LT BLU</text>
<line x1="41.8" y1="416.8" x2="850.5" y2="416.8" stroke="#ff00ff" stroke-width="1.7" />
<text x="31" y="417.9" font-size="6.5" fill="#444" >2</text>
<text x="44.4" y="412.7" font-size="7" fill="#3a3a3a" >PPL</text>
<text x="845.3" y="412.6" text-anchor="end" font-size="7" fill="#3a3a3a" >PPL</text>
<text x="857.9" y="418.4" font-size="6.5" fill="#444" >1</text>
<line x1="41.8" y1="440.2" x2="850.5" y2="440.2" stroke="#fff700" stroke-width="1.7" />
<text x="31" y="441.8" font-size="6.5" fill="#444" >3</text>
<text x="44.9" y="436.5" font-size="7" fill="#3a3a3a" >YEL</text>
<text x="845.3" y="436.7" text-anchor="end" font-size="7" fill="#3a3a3a" >YEL</text>
<text x="857.9" y="442.4" font-size="6.5" fill="#444" >2</text>
<line x1="41.8" y1="451.8" x2="850.5" y2="451.8" stroke="#fff700" stroke-width="1.7" />
<text x="31" y="452.8" font-size="6.5" fill="#444" >4</text>
<text x="44.9" y="449" font-size="7" fill="#3a3a3a" >YEL</text>
<text x="845.3" y="448.5" text-anchor="end" font-size="7" fill="#3a3a3a" >YEL</text>
<text x="857.9" y="454.3" font-size="6.5" fill="#444" >3</text>
<line x1="41.8" y1="487.2" x2="850.5" y2="487.2" stroke="#bababa" stroke-width="1.5" />
<text x="31" y="488.7" font-size="6.5" fill="#444" >5</text>
<text x="44.9" y="482.8" font-size="7" fill="#3a3a3a" >WHT/BLK</text>
<text x="845.5" y="482.6" text-anchor="end" font-size="7" fill="#3a3a3a" >WHT/BLK</text>
<text x="857.9" y="489.0" font-size="6.5" fill="#444" >4</text>
<line x1="41.8" y1="522" x2="850.5" y2="522" stroke="#1e9e14" stroke-width="1.7" />
<text x="31" y="523.9" font-size="6.5" fill="#444" >6</text>
<text x="44.9" y="518.5" font-size="7" fill="#3a3a3a" >GRN</text>
<text x="845.5" y="518.3" text-anchor="end" font-size="7" fill="#3a3a3a" >GRN</text>
<text x="857.9" y="524.1" font-size="6.5" fill="#444" >5</text>
<line x1="41.8" y1="580.8" x2="850.5" y2="580.8" stroke="#ee1111" stroke-width="1.7" />
<text x="31" y="581.9" font-size="6.5" fill="#444" >7</text>
<text x="44.9" y="576.8" font-size="7" fill="#3a3a3a" >RED</text>
<text x="845.5" y="576.6" text-anchor="end" font-size="7" fill="#3a3a3a" >RED</text>
<text x="857.9" y="582.4" font-size="6.5" fill="#444" >6</text>
<line x1="41.8" y1="674.2" x2="640.1" y2="674.2" stroke="#fff700" stroke-width="1.7" />
<text x="31" y="675.7" font-size="6.5" fill="#444" >8</text>
<text x="44.6" y="670.6" font-size="7" fill="#3a3a3a" >YEL</text>
<line x1="41.8" y1="698.1" x2="850.5" y2="698.1" stroke="#d8d8d8" stroke-width="1.7" />
<text x="31" y="700.0" font-size="6.5" fill="#444" >9</text>
<text x="44.6" y="694.6" font-size="7" fill="#3a3a3a" >WHT</text>
<line x1="41.8" y1="709.7" x2="850.5" y2="709.7" stroke="#1e9e14" stroke-width="1.4" />
<line x1="41.8" y1="710.9" x2="850.5" y2="710.9" stroke="#f0f060" stroke-width="0.7" />
<text x="29.2" y="711.0" font-size="6.5" fill="#444" >10</text>
<text x="44.6" y="706" font-size="7" fill="#3a3a3a" >GRN/YEL</text>
<line x1="41.8" y1="721.2" x2="780.3" y2="721.2" stroke="#00e600" stroke-width="1.7" />
<line x1="780.2" y1="393.6" x2="780.2" y2="722" stroke="#00e600" stroke-width="1.7" />
<text x="29.2" y="722.9" font-size="6.5" fill="#444" >11</text>
<text x="44.6" y="718" font-size="7" fill="#3a3a3a" >LT GRN</text>
<line x1="487.1" y1="686" x2="850.5" y2="686" stroke="#7cc47c" stroke-width="1.7" />
<line x1="487.1" y1="685.2" x2="487.1" y2="792" stroke="#7cc47c" stroke-width="1.7" />
<text x="845.4" y="681.8" text-anchor="end" font-size="7" fill="#3a3a3a" >GRN/WHT</text>
<text x="857.9" y="687.8" font-size="6.5" fill="#444" >7</text>
<text x="845.4" y="693.8" text-anchor="end" font-size="7" fill="#3a3a3a" >WHT</text>
<text x="857.9" y="699.8" font-size="6.5" fill="#444" >8</text>
<text x="845.4" y="704.9" text-anchor="end" font-size="7" fill="#3a3a3a" >GRN/YEL</text>
<text x="857.9" y="711.3" font-size="6.5" fill="#444" >9</text>
<text x="845.4" y="717" text-anchor="end" font-size="7" fill="#3a3a3a" >BLK/YEL</text>
<text x="857.9" y="722.9" font-size="6.5" fill="#444" >10</text>
<polyline points="639.7,792 639.7,733.2 850.5,733.2" fill="none" stroke="#ffd838" stroke-width="1.7" />
<line x1="640.9" y1="734.2" x2="640.9" y2="792" stroke="#ff9aa0" stroke-width="0.6" />
<line x1="640.5" y1="734.1" x2="850.5" y2="734.1" stroke="#ffa860" stroke-width="0.6" />
<text x="845.4" y="728.9" text-anchor="end" font-size="7" fill="#3a3a3a" >YEL/RED</text>
<text x="857.9" y="735.3" font-size="6.5" fill="#444" >11</text>
<polyline points="452.1,792 452.1,744.5 850.5,744.5" fill="none" stroke="#3535e0" stroke-width="1.7" />
<text x="845.4" y="740" text-anchor="end" font-size="7" fill="#3a3a3a" >BLU/WHT</text>
<text x="857.9" y="746.1" font-size="6.5" fill="#444" >12</text>
<line x1="65" y1="756.5" x2="850.5" y2="756.5" stroke="#d8d8d8" stroke-width="1.7" />
<text x="845.4" y="752" text-anchor="end" font-size="7" fill="#3a3a3a" >WHT</text>
<text x="857.9" y="758.1" font-size="6.5" fill="#444" >13</text>
<polyline points="158.9,792 158.9,768.1 850.5,768.1" fill="none" stroke="#ff8098" stroke-width="1.7" />
<text x="845.4" y="763.7" text-anchor="end" font-size="7" fill="#3a3a3a" >PNK</text>
<text x="857.9" y="770.1" font-size="6.5" fill="#444" >14</text>
<line x1="65" y1="780" x2="850.5" y2="780" stroke="#3535e0" stroke-width="1.7" />
<text x="845.4" y="775.1" text-anchor="end" font-size="7" fill="#3a3a3a" >BLU/BLK</text>
<text x="857.9" y="781.2" font-size="6.5" fill="#444" >15</text>
<line x1="146.7" y1="791.4" x2="850.5" y2="791.4" stroke="#ee1111" stroke-width="1.7" />
<text x="845.4" y="786.8" text-anchor="end" font-size="7" fill="#3a3a3a" >RED/BLK</text>
<text x="857.9" y="792.9" font-size="6.5" fill="#444" >16</text>
<polyline points="803.4,792 803.4,721 850.5,721" fill="none" stroke="#505050" stroke-width="1.3" />
<line x1="804.5" y1="722" x2="804.5" y2="792" stroke="#ffff60" stroke-width="0.7" />
<line x1="804.2" y1="722.1" x2="850.5" y2="722.1" stroke="#ffff60" stroke-width="0.7" />
<polyline points="65,744.6 135.9,744.6 135.9,792" fill="none" stroke="#d8d8d8" stroke-width="1.7" />
<polyline points="65,768.2 124.2,768.2 124.2,792" fill="none" stroke="#3535e0" stroke-width="1.7" />
<line x1="124.2" y1="780" x2="160" y2="780" stroke="#3535e0" stroke-width="1.7" />
<rect x="34.5" y="734.8" width="26.700000000000003" height="53.80000000000007" fill="#d9d9fc" stroke="#6c6c76" stroke-width="1.35" stroke-dasharray="7.2 3.8"/>
<polyline points="60,744.6 46.1,744.6 46.1,756.1 60,756.1" fill="none" stroke="#4a4a4a" stroke-width="1" />
<polyline points="57.199999999999996,741.3000000000001 60.4,744.6 57.199999999999996,747.9" fill="none" stroke="#4a4a4a" stroke-width="1" />
<polyline points="57.199999999999996,752.8000000000001 60.4,756.1 57.199999999999996,759.4" fill="none" stroke="#4a4a4a" stroke-width="1" />
<path d="M63.4,740.7 Q68,744.6 63.4,748.5" fill="none" stroke="#4a4a4a" stroke-width="1.0" />
<path d="M63.4,752.2 Q68,756.1 63.4,760.0" fill="none" stroke="#4a4a4a" stroke-width="1.0" />
<polyline points="60,768.1 46.1,768.1 46.1,780 60,780" fill="none" stroke="#4a4a4a" stroke-width="1" />
<polyline points="57.199999999999996,764.8000000000001 60.4,768.1 57.199999999999996,771.4" fill="none" stroke="#4a4a4a" stroke-width="1" />
<polyline points="57.199999999999996,776.7 60.4,780 57.199999999999996,783.3" fill="none" stroke="#4a4a4a" stroke-width="1" />
<path d="M63.4,764.2 Q68,768.1 63.4,772.0" fill="none" stroke="#4a4a4a" stroke-width="1.0" />
<path d="M63.4,776.1 Q68,780 63.4,783.9" fill="none" stroke="#4a4a4a" stroke-width="1.0" />
<text x="79.5" y="740.9" font-size="7" fill="#3a3a3a" >WHT</text>
<text x="79.5" y="752.8" font-size="7" fill="#3a3a3a" >WHT</text>
<text x="79.5" y="764.8" font-size="7" fill="#3a3a3a" >BLU/BLK</text>
<text x="79.5" y="775.8" font-size="7" fill="#3a3a3a" >BLU/BLK</text>
</g>
</svg>
</body></html>
